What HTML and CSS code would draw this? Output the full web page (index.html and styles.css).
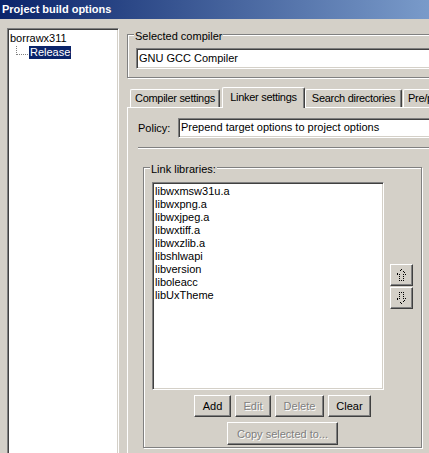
FILE: index.html
```html
<!DOCTYPE html>
<html lang="en">

<head>
    <meta charset="UTF-8">
    <title>Project build options</title>
    <link rel="stylesheet" href="styles.css">
</head>

<body>
    <div class="window">
        <div class="titlebar">Project build options</div>

        <div class="main">
            <!-- Targets tree -->
            <div class="tree">
                <div class="tree-root">borrawx311</div>
                <div class="tree-child">
                    <span class="connector"></span>
                    <span class="tree-label selected">Release</span>
                </div>
            </div>

            <div class="side">
                <div class="group compiler-group">
                    <span class="group-label">Selected compiler</span>
                    <div class="combo">GNU GCC Compiler</div>
                </div>

                <!-- Notebook -->
                <div class="tabs">
                    <div class="tab tab-compiler">Compiler settings</div>
                    <div class="tab tab-linker active">Linker settings</div>
                    <div class="tab tab-search">Search directories</div>
                    <div class="tab tab-pre">Pre/post build steps</div>
                </div>

                <div class="page">
                    <div class="policy-row">
                        <span class="policy-label">Policy:</span>
                        <div class="combo policy-combo">Prepend target options to project options</div>
                    </div>

                    <div class="separator"></div>

                    <div class="group link-group">
                        <span class="group-label">Link libraries:</span>
                        <div class="list-row">
                            <div class="listbox">
                                <div class="list-item">libwxmsw31u.a</div>
                                <div class="list-item">libwxpng.a</div>
                                <div class="list-item">libwxjpeg.a</div>
                                <div class="list-item">libwxtiff.a</div>
                                <div class="list-item">libwxzlib.a</div>
                                <div class="list-item">libshlwapi</div>
                                <div class="list-item">libversion</div>
                                <div class="list-item">liboleacc</div>
                                <div class="list-item">libUxTheme</div>
                            </div>
                            <div class="arrows">
                                <button class="btn arrow-btn">
                                    <svg width="11" height="12" viewBox="0 0 11 12">
                                        <polygon points="5.5,0.5 10.5,5.5 7.5,5.5 7.5,11.5 3.5,11.5 3.5,5.5 0.5,5.5" />
                                    </svg>
                                </button>
                                <button class="btn arrow-btn">
                                    <svg width="11" height="12" viewBox="0 0 11 12">
                                        <polygon points="5.5,11.5 10.5,6.5 7.5,6.5 7.5,0.5 3.5,0.5 3.5,6.5 0.5,6.5" />
                                    </svg>
                                </button>
                            </div>
                        </div>

                        <div class="buttons">
                            <button class="btn btn-add">Add</button>
                            <button class="btn btn-edit disabled">Edit</button>
                            <button class="btn btn-delete disabled">Delete</button>
                            <button class="btn btn-clear">Clear</button>
                        </div>
                        <div class="buttons">
                            <button class="btn btn-copy disabled">Copy selected to...</button>
                        </div>
                    </div>
                </div>
            </div>
        </div>
    </div>
</body>

</html>
```

FILE: styles.css
```css
* {
    box-sizing: border-box;
}

body {
    margin: 0;
    font-family: "Liberation Sans", Arial, sans-serif;
    font-size: 11px;
    color: #000;
}

/* Window frame */
.window {
    width: 429px;
    height: 453px;
    overflow: hidden;
    background-color: #d4d0c8;
}

.titlebar {
    height: 19px;
    line-height: 19px;
    padding-left: 2px;
    font-weight: bold;
    color: #fff;
    white-space: nowrap;
    background: linear-gradient(to right, #0a246a, #a6caf0) 0 0 / 600px 100% no-repeat;
}

.main {
    display: flex;
    align-items: flex-start;
}

/* Sunken look for tree, list and combos */
.tree,
.listbox,
.combo {
    background-color: #fff;
    border: 1px solid;
    border-color: #808080 #fff #fff #808080;
    box-shadow: inset 1px 1px #404040, inset -1px -1px #d4d0c8;
}

/* Targets tree */
.tree {
    flex-shrink: 0;
    width: 112px;
    height: 440px;
    margin: 9px 0 0 7px;
    padding: 1px;
}

.tree-root {
    height: 15px;
    line-height: 15px;
    margin-top: 1px;
    padding-left: 1px;
}

.tree-child {
    display: flex;
    height: 14px;
}

.connector {
    width: 12px;
    height: 9px;
    margin-left: 7px;
    border-left: 1px dotted #808080;
    border-bottom: 1px dotted #808080;
}

.tree-label {
    height: 13px;
    line-height: 13px;
    margin-left: 1px;
    padding: 0 1px;
}

.tree-label.selected {
    background-color: #0a246a;
    color: #fff;
}

/* Right hand side */
.side {
    flex-shrink: 0;
    width: 320px;
    margin-left: 8px;
}

/* Etched group box */
.group {
    position: relative;
    border: 1px solid #808080;
    box-shadow: inset 1px 1px #fff, 1px 1px #fff;
}

.group-label {
    position: absolute;
    top: -5px;
    left: 6px;
    padding: 0 1px;
    line-height: 13px;
    background-color: #d4d0c8;
    white-space: nowrap;
}

.compiler-group {
    height: 44px;
    margin-top: 15px;
    padding: 13px 8px 0 8px;
}

.combo {
    height: 21px;
    line-height: 18px;
    padding-left: 2px;
    white-space: nowrap;
    overflow: hidden;
}

/* Notebook tabs */
.tabs {
    display: flex;
    align-items: flex-end;
    height: 20px;
    margin-top: 9px;
}

.tab {
    flex-shrink: 0;
    height: 18px;
    line-height: 17px;
    text-align: center;
    letter-spacing: -0.3px;
    white-space: nowrap;
    overflow: hidden;
    border: 1px solid;
    border-color: #fff #404040 transparent #fff;
    border-bottom: none;
    border-radius: 2px 2px 0 0;
    box-shadow: inset -1px 0 #808080;
}

.tab-compiler {
    width: 90px;
    margin-left: 3px;
}

.tab.active {
    position: relative;
    z-index: 1;
    height: 21px;
    line-height: 18px;
    margin-bottom: -1px;
    background-color: #d4d0c8;
}

.tab-linker {
    width: 83px;
    margin-left: 2px;
}

.tab-search {
    width: 97px;
}

.tab-pre {
    width: 110px;
    margin-left: 1px;
    text-align: left;
    padding-left: 4px;
}

.page {
    height: 360px;
    padding: 10px 0 0 10px;
    border-top: 1px solid #fff;
    border-left: 1px solid #fff;
}

.policy-row {
    display: flex;
    align-items: center;
    height: 20px;
}

.policy-label {
    width: 40px;
    flex-shrink: 0;
}

.policy-combo {
    flex: 1;
    height: 20px;
    line-height: 17px;
}

.separator {
    height: 2px;
    margin-top: 9px;
    border-top: 1px solid #808080;
    border-bottom: 1px solid #fff;
}

/* Link libraries box */
.link-group {
    width: 279px;
    height: 281px;
    margin: 18px 0 0 5px;
    padding: 14px 8px 0 8px;
}

.list-row {
    display: flex;
    align-items: center;
    gap: 6px;
}

.listbox {
    width: 232px;
    height: 208px;
    padding: 2px 0 0 2px;
}

.list-item {
    height: 13px;
    line-height: 13px;
    white-space: nowrap;
}

.arrows {
    display: flex;
    flex-direction: column;
    gap: 1px;
}

/* Raised buttons */
.btn {
    height: 22px;
    padding: 0;
    font: inherit;
    color: #000;
    background-color: #d4d0c8;
    border: 1px solid;
    border-color: #fff #404040 #404040 #fff;
    box-shadow: inset -1px -1px #808080;
    white-space: nowrap;
}

.btn.disabled {
    color: #808080;
    text-shadow: 1px 1px 0 #fff;
}

.arrow-btn {
    width: 23px;
    display: flex;
    align-items: center;
    justify-content: center;
}

.arrow-btn polygon {
    fill: none;
    stroke: #000;
    stroke-width: 1;
    stroke-dasharray: 1 1;
    shape-rendering: crispEdges;
}

.buttons {
    display: flex;
    justify-content: center;
    gap: 4px;
    margin-top: 5px;
}

.btn-add {
    width: 37px;
}

.btn-edit {
    width: 36px;
}

.btn-delete {
    width: 49px;
}

.btn-clear {
    width: 43px;
}

.btn-copy {
    width: 111px;
    height: 23px;
}
```
